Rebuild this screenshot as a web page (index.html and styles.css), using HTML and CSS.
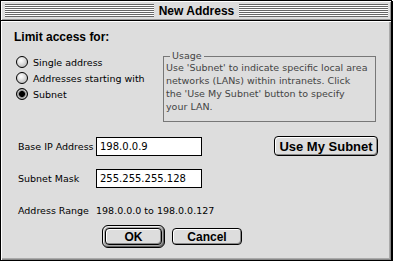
FILE: index.html
```html
<!DOCTYPE html>
<html>
<head>
<meta charset="utf-8">
<link rel="stylesheet" href="styles.css">
</head>
<body>
<div class="window">
  <div class="titlebar">
    <div class="stripes"></div>
    <div class="title">New Address</div>
    <div class="stripes"></div>
  </div>
  <div class="content">
    <div class="heading">Limit access for:</div>
    <div class="options">
      <div class="radios">
        <div class="radio-row"><span class="radio"></span><span>Single address</span></div>
        <div class="radio-row"><span class="radio"></span><span>Addresses starting with</span></div>
        <div class="radio-row"><span class="radio checked"></span><span>Subnet</span></div>
      </div>
      <fieldset class="usage">
        <legend>Usage</legend>
        <p>Use 'Subnet' to indicate specific local area<br>networks (LANs) within intranets. Click<br>the 'Use My Subnet' button to specify<br>your LAN.</p>
      </fieldset>
    </div>
    <div class="fields">
      <span class="label">Base IP Address</span>
      <div class="input">198.0.0.9</div>
      <button class="btn subnet-btn">Use My Subnet</button>
      <span class="label">Subnet Mask</span>
      <div class="input">255.255.255.128</div>
      <span></span>
      <span class="label range">Address Range</span>
      <span class="value">198.0.0.0 to 198.0.0.127</span>
      <span></span>
    </div>
    <div class="actions">
      <div class="default-ring"><button class="btn ok-btn">OK</button></div>
      <button class="btn cancel-btn">Cancel</button>
    </div>
  </div>
</div>
</body>
</html>
```

FILE: styles.css
```css
html, body {
  margin: 0;
  padding: 0;
  background: #fff;
}

.window {
  width: 390px;
  height: 259px;
  border: 1px solid #000;
  box-shadow: 1px 1px 0 #000;
  background: #dddddd;
  display: flex;
  flex-direction: column;
  font-family: "DejaVu Sans", Verdana, sans-serif;
  font-size: 9.5px;
  color: #000;
}

.titlebar {
  height: 20px;
  flex: none;
  border-bottom: 1px solid #000;
  box-shadow: inset 1px 1px 0 #fff, inset -1px -1px 0 #999;
  display: flex;
  align-items: center;
  padding: 0 3px 0 4px;
  box-sizing: border-box;
}

.stripes {
  flex: 1;
  height: 13px;
  background: repeating-linear-gradient(to bottom, #666 0 1px, #fff 1px 2px);
}

.title {
  font-family: "Liberation Sans", Arial, sans-serif;
  font-weight: bold;
  font-size: 12px;
  padding: 0 5px;
  line-height: 14px;
}

.content {
  flex: 1;
  box-shadow: inset 1px 1px 0 #fff, inset -1px -1px 0 #888, inset -2px -2px 0 #aaa;
  padding: 9px 0 0 13px;
}

.heading {
  font-family: "Liberation Sans", Arial, sans-serif;
  font-weight: bold;
  font-size: 12px;
  line-height: 14px;
}

.options {
  display: flex;
  margin-top: 7px;
}

.radios {
  width: 149px;
  padding-top: 3px;
  display: flex;
  flex-direction: column;
}

.radio-row {
  height: 16px;
  display: flex;
  align-items: center;
  gap: 5px;
  padding-left: 2px;
}

.radio {
  width: 10px;
  height: 10px;
  border: 1px solid #000;
  border-radius: 50%;
  background: radial-gradient(circle at 40% 35%, #fff 0, #e8e8e8 30%, #aaa 100%);
  flex: none;
}

.radio.checked {
  background: radial-gradient(circle at 50% 50%, #000 0 2.6px, #777 3.2px, #ccc 4.2px, #888 5px);
}

.usage {
  margin: 0;
  width: 199px;
  border: 1px solid #777;
  padding: 0 8px 8px 2px;
  color: #444;
  line-height: 13px;
}

.usage legend {
  margin-left: 4px;
  padding: 0 2px;
  line-height: 10px;
}

.usage p {
  margin: 0;
  white-space: nowrap;
}

.fields {
  display: grid;
  grid-template-columns: 78px 178px 104px;
  row-gap: 13px;
  align-items: center;
  margin: 14px 0 0 4px;
}

.label {
  line-height: 13px;
}

.input {
  width: 101px;
  height: 17px;
  border: 1px solid #000;
  background: #fff;
  padding-left: 3px;
  line-height: 17px;
  font-size: 10px;
}

.value {
  line-height: 13px;
  white-space: nowrap;
  margin-top: 3px;
}

.label.range {
  margin-top: 3px;
}

.btn {
  font-family: "Liberation Sans", Arial, sans-serif;
  font-weight: bold;
  font-size: 12px;
  background: #ddd;
  border: 1px solid #000;
  border-radius: 4px;
  box-shadow: inset 1px 1px 0 #fff, inset -1px -1px 0 #888;
  padding: 0;
  color: #000;
}

.subnet-btn {
  height: 20px;
  font-size: 13px;
}

.actions {
  display: flex;
  align-items: center;
  gap: 7px;
  margin: 8px 0 0 88px;
}

.default-ring {
  border: 1px solid #000;
  border-radius: 6px;
  padding: 2px;
  background: #aaa;
  box-shadow: inset 1px 1px 0 #eee, inset -1px -1px 0 #666;
  display: flex;
}

.ok-btn {
  width: 57px;
  height: 17px;
}

.cancel-btn {
  width: 70px;
  height: 17px;
}
```
